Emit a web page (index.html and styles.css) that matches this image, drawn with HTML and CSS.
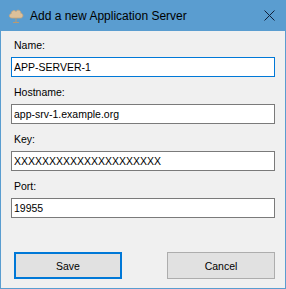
FILE: index.html
```html
<!DOCTYPE html>
<html lang="en">
<head>
    <meta charset="UTF-8">
    <meta name="viewport" content="width=device-width, initial-scale=1.0">
    <title>Add a new Application Server</title>
    <link rel="stylesheet" href="styles.css">
</head>
<body>
    <div class="window">
        <div class="titlebar">
            <svg class="app-icon" width="16" height="16" viewBox="0 0 16 16">
                <path d="M3.8 10 C0.8 10 0.6 6.2 3.2 5.8 C3.2 2.6 6.6 1.6 8 3.6 C9.2 1.2 13 2 12.8 5.2 C15.6 5.4 15.6 10 12.6 10 Z" fill="#dcc09a" stroke="#c8a67a" stroke-width="0.8"/>
                <line x1="8" y1="10" x2="8" y2="14" stroke="#b89a72" stroke-width="1"/>
                <line x1="5" y1="14.5" x2="11" y2="14.5" stroke="#b89a72" stroke-width="1"/>
            </svg>
            <span class="title">Add a new Application Server</span>
            <svg class="close" width="11" height="11" viewBox="0 0 11 11">
                <path d="M0.5 0.5 L10.5 10.5 M10.5 0.5 L0.5 10.5" stroke="#10203a" stroke-width="1"/>
            </svg>
        </div>

        <form class="content">
            <div class="form-group">
                <label for="name">Name:</label>
                <input type="text" id="name" class="focused" value="APP-SERVER-1">
            </div>

            <div class="form-group">
                <label for="hostname">Hostname:</label>
                <input type="text" id="hostname" value="app-srv-1.example.org">
            </div>

            <div class="form-group">
                <label for="key">Key:</label>
                <input type="text" id="key" value="XXXXXXXXXXXXXXXXXXXXX">
            </div>

            <div class="form-group">
                <label for="port">Port:</label>
                <input type="text" id="port" value="19955">
            </div>

            <div class="buttons">
                <button type="button" class="btn default">Save</button>
                <button type="button" class="btn">Cancel</button>
            </div>
        </form>
    </div>
</body>
</html>
```

FILE: styles.css
```css
body {
    margin: 0;
    font-family: "Liberation Sans", Arial, sans-serif;
    background: #f0f0f0;
}
.window {
    width: 286px;
    height: 289px;
    box-sizing: border-box;
    border: 1px solid #5a9dd0;
    border-top: none;
    background: #f0f0f0;
    display: flex;
    flex-direction: column;
}
.titlebar {
    height: 31px;
    margin: 0 -1px;
    background: #5a9dd0;
    display: flex;
    align-items: center;
    flex-shrink: 0;
}
.app-icon {
    margin-left: 8px;
}
.title {
    margin-left: 6px;
    font-size: 12px;
    color: #000;
}
.close {
    margin-left: auto;
    margin-right: 11px;
}
.content {
    padding: 6px 10px 0 10px;
    display: flex;
    flex-direction: column;
    flex: 1;
}
.form-group {
    display: flex;
    flex-direction: column;
    margin-bottom: 7px;
}
label {
    height: 16px;
    line-height: 16px;
    margin-bottom: 4px;
    padding-left: 3px;
    font-size: 10.5px;
    color: #000;
}
input {
    height: 20px;
    box-sizing: border-box;
    border: 1px solid #7a7a7a;
    background: #fff;
    padding: 0 2px;
    font-family: "Liberation Sans", Arial, sans-serif;
    font-size: 10.5px;
    color: #000;
    outline: none;
}
input.focused {
    border-color: #0078d7;
}
.buttons {
    display: flex;
    justify-content: space-between;
    margin-top: 27px;
    padding-left: 3px;
}
.btn {
    width: 108px;
    height: 27px;
    box-sizing: border-box;
    background: #e1e1e1;
    border: 1px solid #adadad;
    font-family: "Liberation Sans", Arial, sans-serif;
    font-size: 10.5px;
    color: #000;
    padding: 0;
}
.btn.default {
    border: 2px solid #0078d7;
}
```
